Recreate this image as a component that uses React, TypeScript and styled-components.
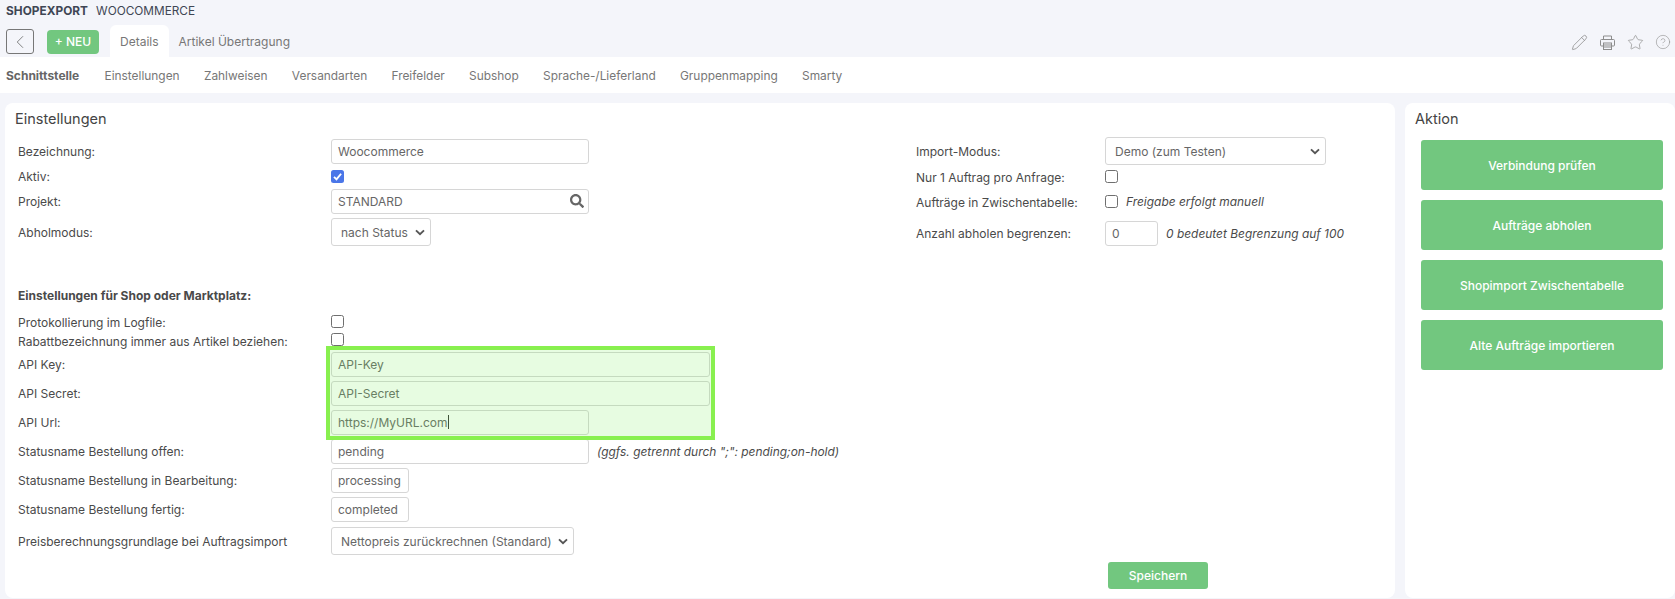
import React from "react";
import styled, { createGlobalStyle } from "styled-components";
import { ChevronLeft, Pencil, Star, CircleHelp } from "lucide-react";
import { FaSearch } from "react-icons/fa";

const Global = createGlobalStyle`
  html, body { margin: 0; padding: 0; background: #f4f5fa; height: 599px; overflow: hidden; }
  body { font-family: Inter, "Liberation Sans", sans-serif; color: #4a4a4a; }
  * { box-sizing: border-box; }
`;
const Page = styled.div`width: 1675px; height: 599px; display: flex; flex-direction: column; overflow: hidden;`;
const TitleBar = styled.div`height: 25px; display: flex; align-items: center; gap: 8px; padding: 0 6px 4px; font-size: 11.8px; color: #3f4654;`;
const TitleStrong = styled.strong`font-weight: 700; letter-spacing: 0.05px;`;
const Toolbar = styled.div`height: 32px; display: flex; align-items: flex-end; padding-left: 6px;`;
const BackButton = styled.div`width: 28px; height: 25px; margin-bottom: 3px; border: 1px solid #777; border-radius: 3px; display: flex; align-items: center; justify-content: center; color: #777;`;
const NewButton = styled.div`width: 52px; height: 24px; margin: 0 11px 3.5px 13px; border-radius: 4px; background: #72c77f; color: #fff; font-size: 12px; font-weight: 500; display: flex; align-items: center; justify-content: center;`;
const Tab = styled.div<{ $active?: boolean }>`height: 32px; padding: 0 10px; display: flex; align-items: center; font-size: 12px; color: #777; border-radius: 6px 6px 0 0; background: ${p => p.$active ? "#fff" : "transparent"};`;
const ToolIcons = styled.div`margin-left: auto; display: flex; align-items: center; gap: 11px; height: 32px; padding: 2px 4px 0 0; color: #8d8d8d;`;
const Nav = styled.nav`height: 36px; background: #fff; display: flex; align-items: center; gap: 24.3px; padding-left: 6px; font-size: 11.9px; color: #777;`;
const NavItem = styled.span<{ $active?: boolean }>`
  font-weight: ${p => p.$active ? 700 : 400};
  font-size: ${p => p.$active ? "12px" : "inherit"};
  color: ${p => p.$active ? "#666" : "inherit"};
  margin-right: ${p => p.$active ? "1px" : "0"};
`;
const Content = styled.div`flex: 1; display: flex; gap: 10px; padding: 10px 0 0 5px; min-height: 0;`;
const Panel = styled.section<{ $width: number }>`width: ${p => p.$width}px; height: 495px; background: #fff; border-radius: 8px; position: relative; flex: none;`;
const PanelTitle = styled.h2`margin: 0; padding: 8px 10px 0; height: 33px; font-size: 14.5px; line-height: 16px; font-weight: 400; color: #444;`;
const Columns = styled.div`display: flex;`;
const LeftCol = styled.div`width: 911px; padding: 3px 0 0 13px;`;
const RightCol = styled.div`padding: 1px 0 0 0;`;
const Row = styled.div<{ $h: number; $top?: number; $label?: number }>`
  display: grid; grid-template-columns: ${p => p.$label ?? 313}px 1fr; align-items: center;
  height: ${p => p.$h}px; margin-top: ${p => p.$top ?? 0}px;
`;
const Label = styled.label<{ $bold?: boolean }>`font-size: 12px; color: #4a4a4a; font-weight: ${p => p.$bold ? 700 : 400};`;
const Cell = styled.div<{ $lift?: number }>`display: flex; align-items: center; gap: 8px; transform: translateY(${p => p.$lift ?? 0}px);`;
const TextBox = styled.div<{ $width: number }>`
  width: ${p => p.$width}px; height: 24.4px; flex: none; position: relative; border: 1px solid #d6d6d6; border-radius: 3px;
  display: flex; align-items: center; padding: 0 6px; font-size: 12px; color: #666;
  background: #fff;
`;
const SelectBox = styled(TextBox)`height: 28px; padding: 0 5px 0 9px; justify-content: space-between;`;
const Caret = styled.span`display: inline-block; width: 1px; height: 14px; background: #333;`;
const SearchMark = styled.span`position: absolute; right: 4px; top: 4px; color: #666; display: flex;`;
const Check = styled.span<{ $on?: boolean }>`
  width: 13px; height: 13px; flex: none; border-radius: 2.5px; display: flex; align-items: center; justify-content: center;
  border: ${p => p.$on ? "none" : "1px solid #6f6f6f"}; background: ${p => p.$on ? "#4a76e8" : "#fff"};
`;
const Hint = styled.em`font-size: 11.95px; color: #4a4a4a;`;
const Highlight = styled.div`position: absolute; left: 321px; top: 243px; width: 389px; height: 94px; border: 4px solid #88f04f; background: rgba(120, 240, 90, 0.18); pointer-events: none;`;
const SaveButton = styled.div`position: absolute; left: 1103px; top: 459px; width: 100px; height: 27px; border-radius: 3px; background: #72c77f; color: #fff; font-size: 12px; font-weight: 500; display: flex; align-items: center; justify-content: center;`;
const Actions = styled.div`display: flex; flex-direction: column; gap: 10px; padding: 4px 12px 0 16px;`;
const ActionButton = styled.div`height: 50px; border-radius: 3px; background: #72c77f; color: #fff; font-size: 12px; font-weight: 500; display: flex; align-items: center; justify-content: center;`;

const Arrow = () => (
  <svg width="10" height="7" viewBox="0 0 10 7"><path d="M1 1.4 5 5.2 9 1.4" fill="none" stroke="#555" strokeWidth="1.9" /></svg>
);
const Tick = () => (
  <svg width="11" height="11" viewBox="0 0 12 12"><path d="M2.2 6.4 4.9 9.1 9.9 3" fill="none" stroke="#fff" strokeWidth="2.1" /></svg>
);
const PrinterIcon = () => (
  <svg width="17" height="17" viewBox="0 0 17 17" fill="none" stroke="currentColor" strokeWidth="1">
    <path d="M4.5 5.5V2h8v3.5" />
    <path d="M4 12H2.5a1 1 0 0 1-1-1V6.5a1 1 0 0 1 1-1h12a1 1 0 0 1 1 1V11a1 1 0 0 1-1 1H13" />
    <rect x="4.5" y="9" width="8" height="6.5" />
    <path d="M4.5 11h8M4.5 13h8" />
  </svg>
);
const navItems = ["Einstellungen", "Zahlweisen", "Versandarten", "Freifelder", "Subshop", "Sprache-/Lieferland", "Gruppenmapping", "Smarty"];
const actions = ["Verbindung prüfen", "Aufträge abholen", "Shopimport Zwischentabelle", "Alte Aufträge importieren"];

export default function App() {
  return (
    <Page>
      <Global />
      <TitleBar><TitleStrong>SHOPEXPORT</TitleStrong><span>WOOCOMMERCE</span></TitleBar>
      <Toolbar>
        <BackButton><ChevronLeft size={22} strokeWidth={1} /></BackButton>
        <NewButton>+ NEU</NewButton>
        <Tab $active>Details</Tab>
        <Tab>Artikel Übertragung</Tab>
        <ToolIcons>
          <Pencil size={17} strokeWidth={1.1} />
          <PrinterIcon />
          <Star size={17} strokeWidth={1} />
          <CircleHelp size={16} strokeWidth={0.9} />
        </ToolIcons>
      </Toolbar>
      <Nav>
        <NavItem $active>Schnittstelle</NavItem>
        {navItems.map(n => <NavItem key={n}>{n}</NavItem>)}
      </Nav>
      <Content>
        <Panel $width={1390}>
          <PanelTitle>Einstellungen</PanelTitle>
          <Columns>
            <LeftCol>
              <Row $h={25}><Label>Bezeichnung:</Label><TextBox $width={258}>Woocommerce</TextBox></Row>
              <Row $h={25}><Label>Aktiv:</Label><Cell><Check $on><Tick /></Check></Cell></Row>
              <Row $h={25}><Label>Projekt:</Label><TextBox $width={258}>STANDARD<SearchMark><FaSearch size={14} /></SearchMark></TextBox></Row>
              <Row $h={28} $top={4}><Label>Abholmodus:</Label><SelectBox $width={100}>nach Status<Arrow /></SelectBox></Row>
              <Row $h={16} $top={41}><Label $bold>Einstellungen für Shop oder Marktplatz:</Label><span /></Row>
              <Row $h={19} $top={10}><Label>Protokollierung im Logfile:</Label><Cell $lift={-1}><Check /></Cell></Row>
              <Row $h={19}><Label>Rabattbezeichnung immer aus Artikel beziehen:</Label><Cell $lift={-2}><Check /></Cell></Row>
              <Row $h={25} $top={1}><Label>API Key:</Label><TextBox $width={379}>API-Key</TextBox></Row>
              <Row $h={25} $top={4}><Label>API Secret:</Label><TextBox $width={379}>API-Secret</TextBox></Row>
              <Row $h={25} $top={4}><Label>API Url:</Label><TextBox $width={258}>https://MyURL.com<Caret /></TextBox></Row>
              <Row $h={25} $top={4}><Label>Statusname Bestellung offen:</Label><Cell><TextBox $width={258}>pending</TextBox><Hint>(ggfs. getrennt durch ";": pending;on-hold)</Hint></Cell></Row>
              <Row $h={25} $top={4}><Label>Statusname Bestellung in Bearbeitung:</Label><TextBox $width={78}>processing</TextBox></Row>
              <Row $h={25} $top={4}><Label>Statusname Bestellung fertig:</Label><TextBox $width={78}>completed</TextBox></Row>
              <Row $h={28} $top={5}><Label>Preisberechnungsgrundlage bei Auftragsimport</Label><SelectBox $width={243}>Nettopreis zurückrechnen (Standard)<Arrow /></SelectBox></Row>
            </LeftCol>
            <RightCol>
              <Row $h={28} $label={189}><Label>Import-Modus:</Label><SelectBox $width={221}>Demo (zum Testen)<Arrow /></SelectBox></Row>
              <Row $h={25} $label={189}><Label>Nur 1 Auftrag pro Anfrage:</Label><Cell $lift={-1}><Check /></Cell></Row>
              <Row $h={25} $label={189}><Label>Aufträge in Zwischentabelle:</Label><Cell $lift={-1}><Check /><Hint>Freigabe erfolgt manuell</Hint></Cell></Row>
              <Row $h={25} $top={6} $label={189}><Label>Anzahl abholen begrenzen:</Label><Cell><TextBox $width={53}>0</TextBox><Hint>0 bedeutet Begrenzung auf 100</Hint></Cell></Row>
            </RightCol>
          </Columns>
          <Highlight />
          <SaveButton>Speichern</SaveButton>
        </Panel>
        <Panel $width={270}>
          <PanelTitle>Aktion</PanelTitle>
          <Actions>{actions.map(a => <ActionButton key={a}>{a}</ActionButton>)}</Actions>
        </Panel>
      </Content>
    </Page>
  );
}
